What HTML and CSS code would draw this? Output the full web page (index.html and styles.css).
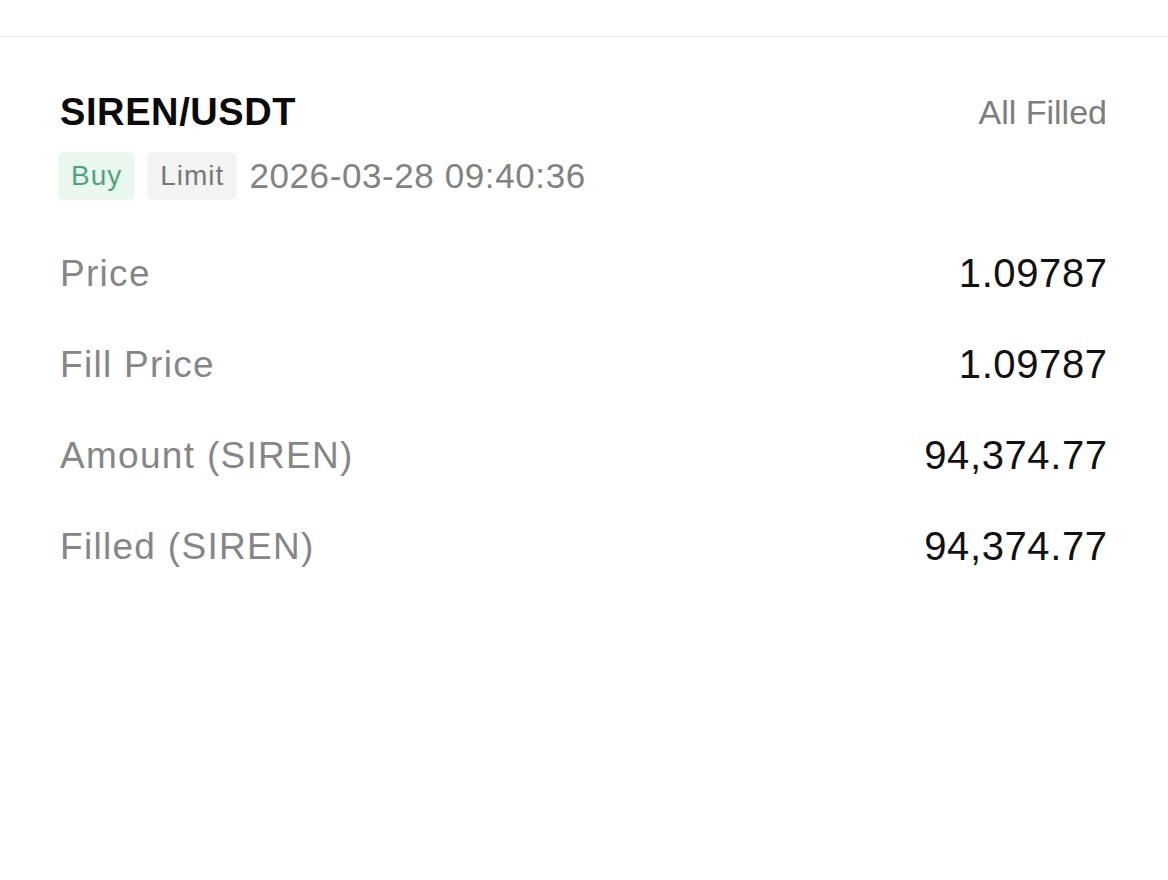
FILE: index.html
```html
<!DOCTYPE html>
<html lang="en">
<head>
<meta charset="utf-8">
<title>Order detail</title>
<link rel="stylesheet" href="styles.css">
</head>
<body>
<div class="topbar"></div>
<section class="order">
  <div class="order-head">
    <div class="pair">SIREN/USDT</div>
    <div class="status">All Filled</div>
  </div>
  <div class="order-meta">
    <span class="tag tag-buy">Buy</span>
    <span class="tag tag-type">Limit</span>
    <span class="time">2026-03-28 09:40:36</span>
  </div>
  <div class="rows">
    <div class="row"><span class="label">Price</span><span class="value">1.09787</span></div>
    <div class="row"><span class="label">Fill Price</span><span class="value">1.09787</span></div>
    <div class="row"><span class="label">Amount (SIREN)</span><span class="value">94,374.77</span></div>
    <div class="row"><span class="label">Filled (SIREN)</span><span class="value">94,374.77</span></div>
  </div>
</section>
</body>
</html>
```

FILE: styles.css
```css
html, body {
  margin: 0;
  padding: 0;
  background: #ffffff;
  font-family: "Liberation Sans", Arial, sans-serif;
}

.topbar {
  height: 36px;
  border-bottom: 1px solid #efefef;
  background: #ffffff;
}

.order {
  padding: 51px 61px 0 60px;
}

.order-head {
  display: flex;
  justify-content: space-between;
  align-items: center;
  height: 48px;
}

.pair {
  font-size: 38px;
  font-weight: 700;
  color: #0a0a0a;
  letter-spacing: 0.6px;
  line-height: 48px;
}

.status {
  font-size: 34px;
  color: #7e7e7e;
  line-height: 48px;
}

.order-meta {
  display: flex;
  align-items: center;
  gap: 12px;
  margin-top: 16px;
  margin-left: -2px;
  height: 48px;
}

.tag {
  display: flex;
  align-items: center;
  height: 48px;
  padding: 0 13px;
  border-radius: 6px;
  font-size: 28px;
  letter-spacing: 1px;
  box-sizing: border-box;
}

.tag-buy {
  background: #e9f7ef;
  color: #4fa37c;
}

.tag-type {
  background: #f3f3f3;
  color: #777777;
}

.time {
  font-size: 35px;
  color: #828282;
  letter-spacing: 0.6px;
}

.rows {
  margin-top: 28px;
  display: flex;
  flex-direction: column;
}

.row {
  display: flex;
  justify-content: space-between;
  align-items: center;
  height: 91px;
}

.label {
  font-size: 37px;
  color: #868686;
  letter-spacing: 1.3px;
}

.value {
  font-size: 40px;
  color: #111111;
  letter-spacing: 0.6px;
  margin-right: -0.6px;
}
```
